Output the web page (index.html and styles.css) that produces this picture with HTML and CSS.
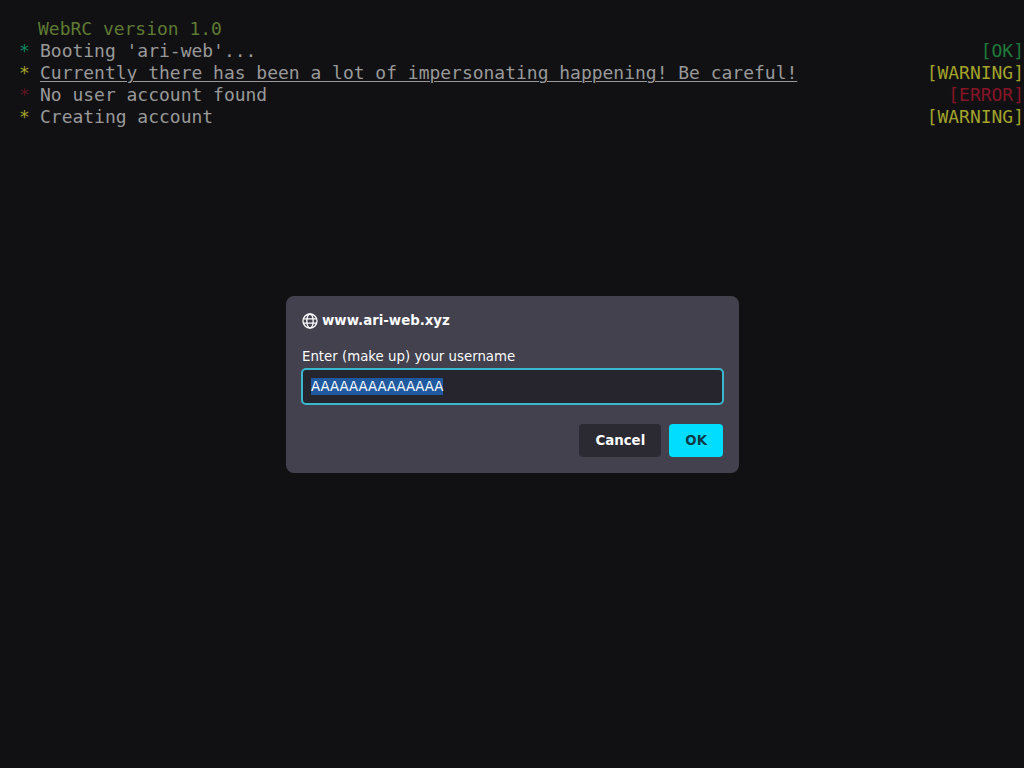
FILE: index.html
```html
<!DOCTYPE html>
<html lang="en">
<head>
<meta charset="utf-8">
<title>WebRC</title>
<link rel="stylesheet" href="styles.css">
</head>
<body>
<main class="terminal">
  <div class="title">WebRC version 1.0</div>
  <div class="row"><span class="star ok">*</span><span class="msg">Booting 'ari-web'...</span><span class="status ok">[OK]</span></div>
  <div class="row"><span class="star warn">*</span><span class="msg under">Currently there has been a lot of impersonating happening! Be careful!</span><span class="status warn">[WARNING]</span></div>
  <div class="row"><span class="star err">*</span><span class="msg">No user account found</span><span class="status err">[ERROR]</span></div>
  <div class="row"><span class="star warn">*</span><span class="msg">Creating account</span><span class="status warn">[WARNING]</span></div>
</main>
<div class="dialog">
  <div class="origin">
    <svg class="globe" width="16" height="16" viewBox="0 0 16 16" fill="none" stroke="#fbfbfe" stroke-width="1.3">
      <circle cx="8" cy="8" r="7"/>
      <ellipse cx="8" cy="8" rx="3.2" ry="7"/>
      <path d="M1.2 5.8h13.6M1.2 10.2h13.6"/>
    </svg>
    <span>www.ari-web.xyz</span>
  </div>
  <div class="label">Enter (make up) your username</div>
  <div class="field"><span class="selected">AAAAAAAAAAAAAA</span></div>
  <div class="actions">
    <button class="btn cancel">Cancel</button>
    <button class="btn confirm">OK</button>
  </div>
</div>
</body>
</html>
```
FILE: styles.css
```css
html, body {
  margin: 0;
  height: 100%;
  background: #111114;
  overflow: hidden;
}
.terminal {
  padding-top: 18px;
  font-family: "DejaVu Sans Mono", monospace;
  font-size: 17.98px;
  line-height: 22px;
  color: #999999;
}
.title {
  padding-left: 38px;
  color: #5f7a32;
}
.row {
  display: flex;
  padding-left: 19px;
}
.star {
  width: 21px;
  flex: none;
}
.msg {
  flex: 1;
}
.msg.under {
  flex: none;
  text-decoration: underline;
  text-decoration-thickness: 1px;
  text-underline-offset: 2px;
  margin-right: auto;
}
.status {
  flex: none;
  margin-left: -1px;
}
.ok { color: #1f7a3a; }
.star.ok { color: #0f8a5f; }
.warn { color: #a3a32a; }
.err { color: #861527; }
.star.err { color: #5c1522; }
.dialog {
  position: fixed;
  left: 286px;
  top: 296px;
  width: 421px;
  height: 145px;
  padding: 16px;
  background: #42414d;
  border-radius: 8px;
  font-family: "DejaVu Sans", sans-serif;
  font-size: 13.33px;
  color: #fbfbfe;
}
.origin {
  display: flex;
  align-items: center;
  gap: 4px;
  height: 17px;
  font-weight: 700;
}
.globe {
  flex: none;
}
.label {
  margin-top: 19px;
  line-height: 17px;
}
.field {
  box-sizing: border-box;
  margin: 3px -1px 0;
  height: 37px;
  padding: 0 8px;
  display: flex;
  align-items: center;
  background: #26252e;
  border: 2px solid #3ab8d0;
  border-radius: 5px;
}
.selected {
  background: #1f5aa0;
  line-height: 17px;
}
.actions {
  display: flex;
  justify-content: flex-end;
  gap: 8px;
  margin-top: 19px;
}
.btn {
  height: 33px;
  padding: 0 16px;
  border: 0;
  border-radius: 4px;
  font-family: "DejaVu Sans", sans-serif;
  font-size: 13.33px;
  font-weight: 700;
}
.cancel {
  min-width: 82px;
  background: #2b2a33;
  color: #fbfbfe;
}
.confirm {
  background: #00ddff;
  color: #0b3a4a;
}
```
